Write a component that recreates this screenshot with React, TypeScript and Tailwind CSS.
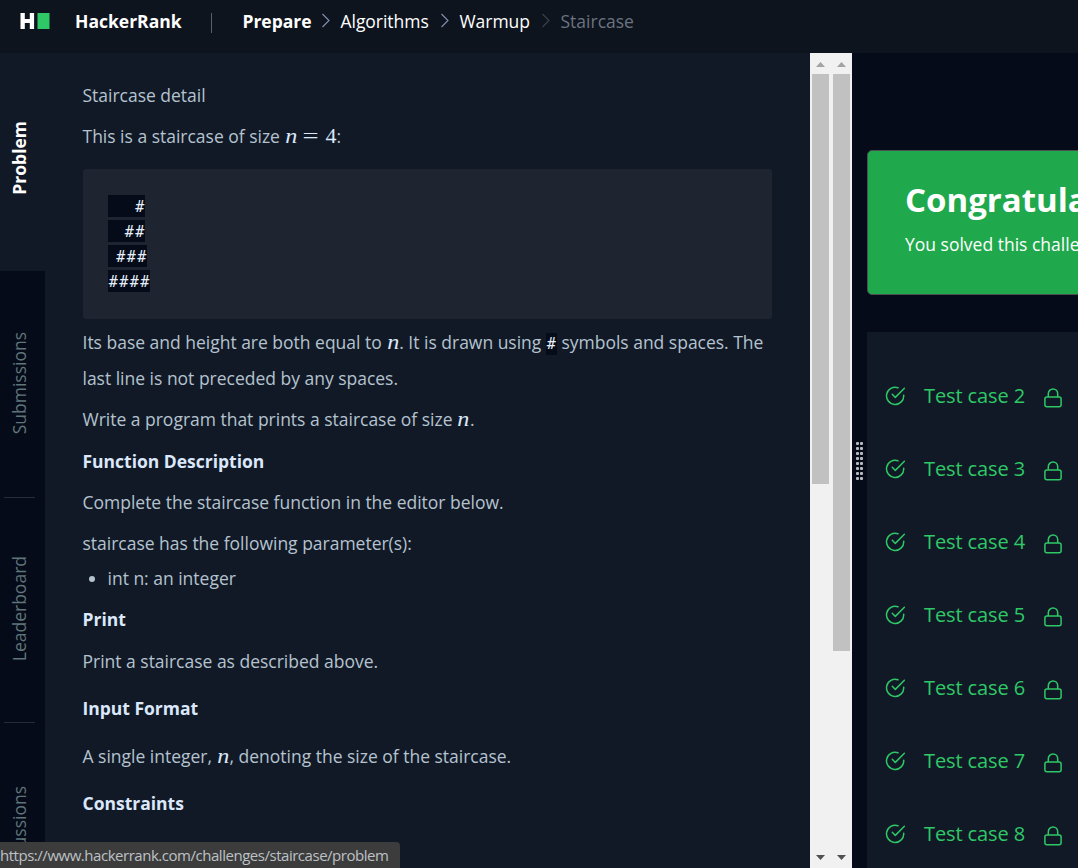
import type { ReactNode } from "react";

const crumbs = [
  { label: "Prepare", cls: "w-[68px] font-bold text-white" },
  { label: "Algorithms", cls: "w-[89px] font-medium text-white" },
  { label: "Warmup", cls: "w-[71px] font-medium text-white" },
];

function Chevron({ dim }: { dim?: boolean }) {
  return (
    <svg width="30" height="16" viewBox="0 0 30 16" fill="none" stroke={dim ? "#39424e" : "#8290b0"} strokeWidth="1.1" className="shrink-0">
      <path d="M11.5 1 L18 7.500 L11.5 14" />
    </svg>
  );
}

function Header() {
  return (
    <header className="flex h-[53px] shrink-0 items-start bg-[#0e141e] pt-[9px] text-[17.5px] leading-6 whitespace-nowrap">
      <div className="ml-[20px] mt-[3px] flex h-[18px] w-[30px] shrink-0 items-center">
        <svg width="30" height="18" viewBox="0 0 30 18">
          <path d="M0.500 1h4.300v6h5V1h4.300v16h-4.300v-6H4.800v6H0.500z" fill="#fff" />
          <path d="M17.500 1h12v16h-12z" fill="#2ec866" />
        </svg>
      </div>
      <div className="ml-[25px] w-[136px] font-bold text-white">HackerRank</div>
      <div className="mt-[4px] h-5 w-px bg-[#5a5f62]" />
      <nav className="ml-[30.5px] flex items-center">
        {crumbs.map((c, i) => (
          <div key={c.label} className="flex items-center">
            <span className={`${c.cls} tracking-[-0.04px]`}>{c.label}</span>
            <Chevron dim={i === 2} />
          </div>
        ))}
        <span className="text-[#6a737f]">Staircase</span>
      </nav>
    </header>
  );
}

function SideTab({ label, cls }: { label: string; cls: string }) {
  return (
    <div className={cls}>
      <span className="rotate-180 whitespace-nowrap [writing-mode:vertical-rl]">{label}</span>
    </div>
  );
}

function Sidebar() {
  return (
    <aside className="flex w-[45px] shrink-0 flex-col overflow-hidden bg-[#050b18] text-[17.5px] leading-6 text-[#5f757b]">
      <SideTab label="Problem" cls="h-[218px] shrink-0 bg-[#121926] pl-[7px] pt-[68px] font-bold text-white" />
      <SideTab label="Submissions" cls="h-[226px] shrink-0 pl-[7px] pt-[61px]" />
      <div className="ml-1 h-px w-[31px] shrink-0 bg-[#252d3a]" />
      <SideTab label="Leaderboard" cls="h-[224px] shrink-0 pl-[7px] pt-[58px]" />
      <div className="ml-1 h-px w-[31px] shrink-0 bg-[#252d3a]" />
      <SideTab label="Discussions" cls="h-[224px] shrink-0 pl-[7px] pt-[63px]" />
    </aside>
  );
}

function N() {
  return (
    <i className="inline-block w-[13px] text-center font-['Liberation_Serif'] text-[21px] leading-5 text-[#dbe8fa]">
      <span className="inline-block scale-x-115">n</span>
    </i>
  );
}

function Title({ children, cls }: { children: ReactNode; cls: string }) {
  return <h3 className={`${cls} font-bold text-[#dbe8fb]`}>{children}</h3>;
}

const steps = [
  { text: "#", cls: "w-[37px]" },
  { text: "##", cls: "w-[37px]" },
  { text: "###", cls: "w-[39px]" },
  { text: "####", cls: "w-[42px]" },
];

function Problem() {
  return (
    <main className="w-[765px] shrink-0 overflow-hidden bg-[#121926] pl-[37.5px] pt-[24px] text-[17.5px] leading-9 tracking-[-0.01px] whitespace-nowrap text-[#b4c3cf]">
      <p>Staircase detail</p>
      <p className="mt-[5px]">
        This is a staircase of size <N />
        <span className="font-['Liberation_Serif'] text-[22px] leading-5 text-[#dbe8fa]">
          <span className="ml-[5px] mr-[6px] inline-block w-[17px] scale-x-130 text-center">=</span>4
        </span>
        :
      </p>
      <pre className="mt-[15px] ml-[0.5px] flex h-[150px] w-[689px] flex-col gap-[3px] rounded-[3px] bg-[#1e2430] pl-[25px] pt-[26px]">
        {steps.map((s) => (
          <code key={s.text} className={`${s.cls} block h-[22px] bg-[#050b18] text-right font-['DejaVu_Sans_Mono'] text-[15px] leading-[24px] tracking-[1.4px] text-[#e6effb]`}>
            <span className="-mr-[0.6px]">{s.text}</span>
          </code>
        ))}
      </pre>
      <p className="mt-[5px] h-9">
        Its base and height are both equal to <N />. It is drawn using{" "}
        <code className="inline-block h-[22px] w-[11px] bg-[#050b18] text-center font-['DejaVu_Sans_Mono'] text-[15px] leading-[23px] text-[#e6effb]">#</code>{" "}
        symbols and spaces. The
      </p>
      <p>last line is not preceded by any spaces.</p>
      <p className="mt-[5px]">
        Write a program that prints a staircase of size <N />.
      </p>
      <Title cls="mt-[6px]">Function Description</Title>
      <p className="mt-[5px]">Complete the staircase function in the editor below.</p>
      <p className="mt-[5px]">staircase has the following parameter(s):</p>
      <ul className="-mt-px">
        <li className="flex items-center">
          <span className="ml-[6.5px] mr-[12.5px] mt-[1px] size-[6px] rounded-full bg-[#b4c3cf]" />
          int n: an integer
        </li>
      </ul>
      <Title cls="mt-[5px]">Print</Title>
      <p className="mt-[6px]">Print a staircase as described above.</p>
      <Title cls="mt-[11px]">Input Format</Title>
      <p className="mt-[12px]">
        A single integer, <N />, denoting the size of the staircase.
      </p>
      <Title cls="mt-[11px]">Constraints</Title>
    </main>
  );
}

function Scrollbar({ thumb }: { thumb: string }) {
  return (
    <div className="flex w-[21px] flex-col items-center bg-[#f1f1f1]">
      <svg width="21" height="21" viewBox="0 0 21 21" className="shrink-0">
        <path d="M6 14l4.500-5 4.500 5z" fill="#a3a3a3" />
      </svg>
      <div className={thumb} />
      <svg width="21" height="21" viewBox="0 0 21 21" className="mt-auto shrink-0">
        <path d="M6 8l4.500 5 4.500-5z" fill="#505050" />
      </svg>
    </div>
  );
}

function CaseRow({ n }: { n: number }) {
  return (
    <li className="flex h-[73px] shrink-0 items-center pl-[18px] text-[20px] text-[#2ec866]">
      <svg width="20" height="20" viewBox="0 0 20 20" fill="none" stroke="currentColor" strokeWidth="1.500" strokeLinecap="round" strokeLinejoin="round">
        <path d="M13 1.700A8.600 8.600 0 1 0 18.700 9.200" />
        <path d="M7.300 8.300L10.300 11.400 19.400 2.300" />
      </svg>
      <span className="ml-[19px] w-[102px] tracking-[-0.1px] whitespace-nowrap">Test case {n}</span>
      <svg width="18" height="20" viewBox="0 0 18 20" fill="none" stroke="currentColor" strokeWidth="1.500" className="ml-[18px] mt-[5px]">
        <rect x="0.900" y="8.900" width="16.200" height="9.800" rx="2" />
        <path d="M4.300 8.900V5.700a4.700 4.700 0 0 1 9.400 0v3.200" />
      </svg>
    </li>
  );
}

function Results() {
  return (
    <section className="flex w-[211px] shrink-0 flex-col overflow-hidden">
      <div className="mt-[97px] h-[145px] w-[400px] shrink-0 rounded-[5px] border border-[#4b5050] bg-[#1fa94c] pl-[37px] pt-[25px] whitespace-nowrap text-white">
        <h2 className="text-[33px] leading-[48px] font-bold">Congratulations</h2>
        <p className="mt-[8px] text-[17.5px] leading-6">You solved this challenge.</p>
      </div>
      <ul className="mt-[37px] flex grow flex-col bg-[#121926] pt-[27px]">
        {[2, 3, 4, 5, 6, 7, 8].map((n) => (
          <CaseRow key={n} n={n} />
        ))}
      </ul>
    </section>
  );
}

function Handle() {
  return (
    <div className="flex w-[15px] shrink-0 justify-start pl-[3.5px] pt-[388.5px]">
      <div className="grid h-[41px] grid-cols-2 content-start gap-x-px gap-y-[2.100px]">
        {Array.from({ length: 16 }, (_, i) => (
          <span key={i} className="size-[3px] rounded-[1px] bg-[#b8bcc0]" />
        ))}
      </div>
    </div>
  );
}

export default function App() {
  return (
    <div className="relative flex h-[868px] w-[1078px] flex-col overflow-hidden bg-[#050b18] font-['Open_Sans',sans-serif]">
      <Header />
      <div className="flex h-[815px] shrink-0">
        <Sidebar />
        <Problem />
        <div className="flex shrink-0">
          <Scrollbar thumb="h-[410px] w-[17px] bg-[#c1c1c1]" />
          <Scrollbar thumb="h-[577px] w-[17px] bg-[#c1c1c1]" />
        </div>
        <Handle />
        <Results />
      </div>
      <div className="absolute bottom-0 left-0 h-[26px] w-[400px] rounded-tr-[4px] bg-[#3c3c3c] text-[15px] leading-[27px] tracking-[-0.47px] whitespace-nowrap text-[#bdc1c6]">
        https://www.hackerrank.com/challenges/staircase/problem
      </div>
    </div>
  );
}
